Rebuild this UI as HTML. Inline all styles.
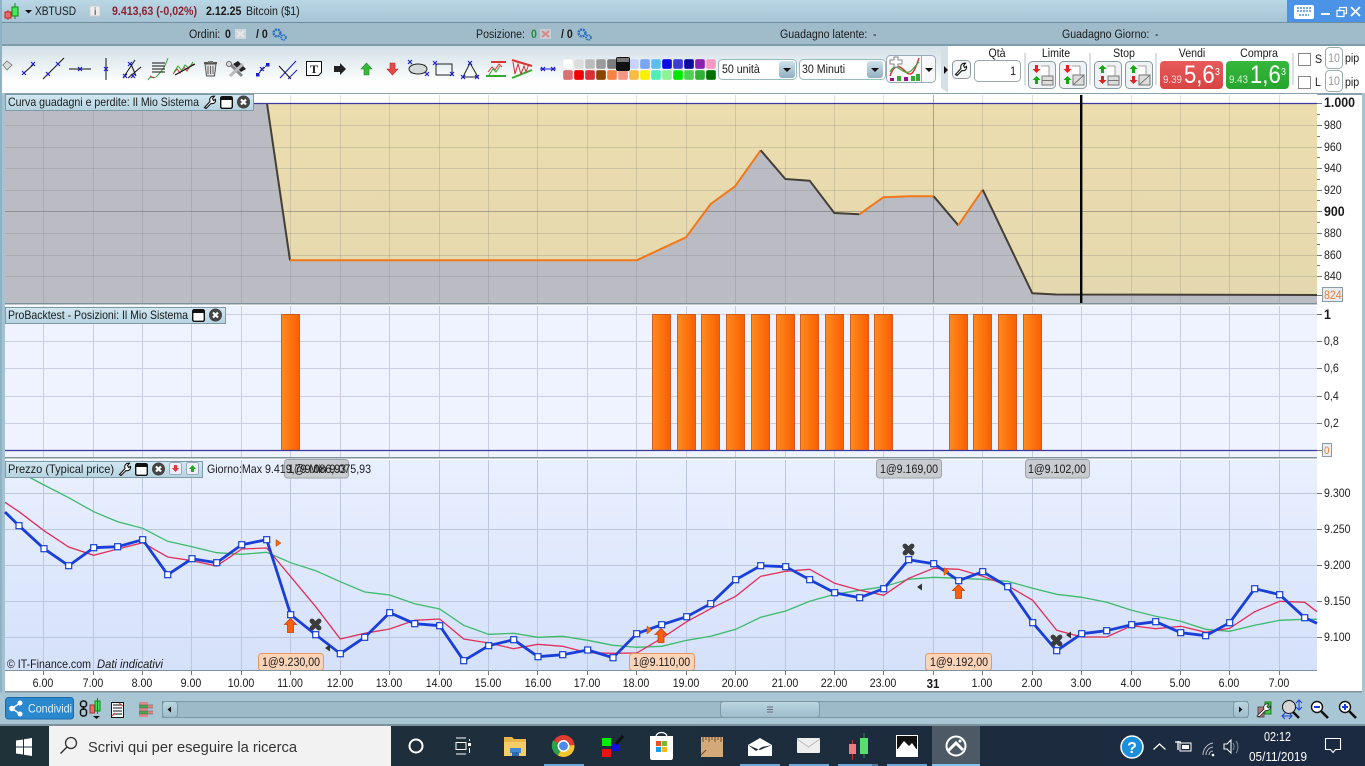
<!DOCTYPE html>
<html><head><meta charset="utf-8"><title>XBTUSD</title>
<style>
html,body{margin:0;padding:0;background:#a5c2d0;width:1365px;height:766px;overflow:hidden}
svg{display:block;position:absolute;left:0;top:0}
text{font-family:"Liberation Sans",sans-serif;font-size:12px;fill:#1a1a1a;transform-box:fill-box;transform-origin:0 50%;transform:scaleX(.885)}
.b{font-weight:bold}.ax{font-size:12px;fill:#222}
.m,.m text{text-anchor:middle;transform-origin:50% 50%}
.e{text-anchor:end;transform-origin:100% 50%}
text.n{transform:none}
</style></head><body>
<svg width="1365" height="766" viewBox="0 0 1365 766" xmlns="http://www.w3.org/2000/svg">
<defs>
<linearGradient id="top" x1="0" y1="0" x2="0" y2="1"><stop offset="0" stop-color="#b9d7e5"/><stop offset="1" stop-color="#a6c4d3"/></linearGradient>
<linearGradient id="tb" x1="0" y1="0" x2="0" y2="1"><stop offset="0" stop-color="#d2e0e7"/><stop offset=".75" stop-color="#fdfefe"/><stop offset="1" stop-color="#fff"/></linearGradient>
<linearGradient id="tab" x1="0" y1="0" x2="0" y2="1"><stop offset="0" stop-color="#d2e8f2"/><stop offset="1" stop-color="#b5d3e0"/></linearGradient>
<linearGradient id="beige" x1="0" y1="0" x2="0" y2="1"><stop offset="0" stop-color="#ecddaf"/><stop offset="1" stop-color="#e4d8ae"/></linearGradient>
<linearGradient id="p3" x1="0" y1="0" x2="0" y2="1"><stop offset="0" stop-color="#e9f0ff"/><stop offset="1" stop-color="#d5e1fa"/></linearGradient>
<linearGradient id="bar" x1="0" y1="0" x2="1" y2="0"><stop offset="0" stop-color="#ff8a20"/><stop offset="1" stop-color="#f85f00"/></linearGradient>
<linearGradient id="btn" x1="0" y1="0" x2="0" y2="1"><stop offset="0" stop-color="#cfe2ec"/><stop offset="1" stop-color="#8fb0c0"/></linearGradient>
<linearGradient id="tk" x1="0" y1="0" x2="1" y2="0"><stop offset="0" stop-color="#1f3139"/><stop offset="1" stop-color="#1b2a40"/></linearGradient>
<linearGradient id="red" x1="0" y1="0" x2="0" y2="1"><stop offset="0" stop-color="#e85a5a"/><stop offset="1" stop-color="#d84444"/></linearGradient>
<linearGradient id="grn" x1="0" y1="0" x2="0" y2="1"><stop offset="0" stop-color="#35b83c"/><stop offset="1" stop-color="#26a52e"/></linearGradient>
<linearGradient id="thumb" x1="0" y1="0" x2="0" y2="1"><stop offset="0" stop-color="#bcd6e2"/><stop offset="1" stop-color="#9dbccb"/></linearGradient>
<marker id="sq" markerUnits="userSpaceOnUse" markerWidth="8" markerHeight="8" refX="4" refY="4"><rect x="1" y="1" width="6" height="6" fill="#fff" stroke="#1540d0" stroke-width="1.2"/></marker>
<g id="x"><path d="M-2-2L2 2M-2 2L2-2" stroke="#1a1ad0" stroke-width="1.1" fill="none"/></g>
<g id="close"><circle cx="6.5" cy="6.5" r="6.5" fill="#444"/><path d="M4 4L9 9M9 4L4 9" stroke="#fff" stroke-width="2.2"/></g>
<g id="win"><rect x=".7" y=".7" width="11.6" height="11.6" rx="1.5" fill="#fff" stroke="#111" stroke-width="1.4"/><rect x="1" y="1" width="11" height="3" fill="#111"/></g>
<g id="wr"><path d="M1.5 12.5L7 6.5C6 3.5 8 .8 11.5 1.2L9.5 3.5L10.5 5.5L12.5 4.5C13 7.5 10.5 9.2 8 8.5L3 13.5Z" fill="#fff" stroke="#111" stroke-width="1.1"/></g>
<g id="gear"><circle cx="5" cy="5" r="3.4" fill="none" stroke="#2a6fc0" stroke-width="2.4" stroke-dasharray="2 .8"/><circle cx="11.5" cy="9.5" r="2.4" fill="none" stroke="#2a6fc0" stroke-width="1.8" stroke-dasharray="1.5 .7"/></g>
<g id="up"><path d="M-3-1H-6L0-7L6-1H3V7H-3Z" fill="#f85f10" stroke="#c84000" stroke-width=".8"/></g>
<g id="cross"><path d="M-3.500-3.500L3.500 3.500M-3.500 3.500L3.500-3.500" stroke="#3c3c3c" stroke-width="4.800" stroke-linecap="round"/></g>
<g id="doc"><rect x=".5" y=".5" width="27" height="27" rx="4" fill="#eef2f4" stroke="#8a9aa3"/><path d="M13 5H21V21H13" fill="#fff" stroke="#888" stroke-width=".8"/></g>
</defs>

<!-- chrome -->
<rect width="1365" height="766" fill="#a5c2d0"/>
<rect width="1365" height="22" fill="url(#top)"/>
<rect y="22" width="1365" height="1" fill="#6f8f9f"/>
<rect y="23" width="1365" height="22" fill="#a0bccb"/>
<rect y="44" width="1365" height="2" fill="#7f9cab"/>
<rect y="46" width="1365" height="47" fill="url(#tb)"/>
<rect x="948" y="46" width="417" height="47" fill="#fff"/>
<path d="M948 46L941 50V88L948 93Z" fill="#d5e0e6"/>
<rect x="0" y="0" width="2" height="725" fill="#8db2c6"/>

<!-- windows controls -->
<rect x="1287" y="0" width="78" height="22" fill="#4a93e6"/>
<rect x="1294" y="5" width="20" height="14" rx="2" fill="#fff"/>
<path d="M1297 8h14M1297 11h14M1299 15h10" stroke="#4a93e6" stroke-width="1.6" stroke-dasharray="2 1"/>
<rect x="1321" y="13" width="9" height="2" fill="#fff"/>
<path d="M1337 10.500h7v6h-7zM1339.500 10V7.500h7v6H1344" fill="none" stroke="#fff" stroke-width="1.200"/>
<path d="M1351 7l9 9M1360 7l-9 9" stroke="#fff" stroke-width="1.800"/>

<!-- top row -->
<path d="M8 10V20" stroke="#c22"/><rect x="5" y="12" width="6" height="6" fill="#f06a6a" stroke="#b22"/>
<path d="M15 3V19" stroke="#181"/><rect x="12" y="7" width="6" height="9" fill="#44e85a" stroke="#181"/>
<path d="M25 10h7l-3.500 3.500z" fill="#111"/>
<text x="35" y="15" class="n" textLength="41" lengthAdjust="spacingAndGlyphs">XBTUSD</text>
<rect x="90" y="6" width="10" height="10" fill="#eee" stroke="#ccc"/><text x="94" y="15" class="b" style="font-size:10px;fill:#666">i</text>
<text x="112" y="15" class="b" style="fill:#8e2233">9.413,63 (-0,02%)</text>
<text x="206" y="15" class="b">2.12.25</text><text x="246" y="15">Bitcoin ($1)</text>

<!-- row 2 -->
<text x="189" y="38">Ordini:</text><text x="225" y="38" class="b">0</text>
<rect x="235" y="29" width="11" height="10" fill="#cdd6da"/><path d="M237 31l7 6M244 31l-7 6" stroke="#e8e8e8" stroke-width="2"/>
<text x="256" y="38" class="b">/ 0</text><use href="#gear" x="272" y="28"/>
<text x="476" y="38">Posizione:</text><text x="531" y="38" class="b" style="fill:#2a8a3a">0</text>
<rect x="540" y="29" width="11" height="10" fill="#c5ced4"/><path d="M542 31l7 6M549 31l-7 6" stroke="#d58a8a" stroke-width="2"/>
<text x="561" y="38" class="b">/ 0</text><use href="#gear" x="577" y="28"/>
<text x="780" y="38">Guadagno latente:</text><text x="873" y="38">-</text>
<text x="1062" y="38">Guadagno Giorno:</text><text x="1155" y="38">-</text>

<!-- drawing toolbar -->
<path d="M3 65l4-4 5 4-5 5z" fill="#ddd" stroke="#888"/>
<path d="M24 73L34 64" stroke="#111"/><use href="#x" x="24" y="73"/><use href="#x" x="33" y="64"/>
<path d="M43 79L64 58" stroke="#111"/><use href="#x" x="48" y="74"/><use href="#x" x="58" y="64"/>
<path d="M69 69H91" stroke="#111"/><use href="#x" x="80" y="69"/>
<path d="M106 58V80" stroke="#111"/><use href="#x" x="106" y="69"/>
<path d="M123 78L135 60M128 78L141 67M131 64L136 76" stroke="#111"/><use href="#x" x="130" y="64"/><use href="#x" x="125" y="76"/><use href="#x" x="133" y="76"/>
<path d="M148 80c3-6 6 0 9-4s6-4 11-18" stroke="#3a3" fill="none"/><path d="M152 63h13M152 66h13M152 69h13M152 72h13" stroke="#111"/><path d="M150 76l4 2" stroke="#c33"/>
<path d="M173 74l4-5 3 4 4-6 3 4 3-5 4-2" stroke="#c33" fill="none"/><path d="M174 72l4-6 4 5 3-6 4 3 4-6" stroke="#3a3" fill="none"/><path d="M175 75L195 64" stroke="#111"/>
<path d="M204 63h13" stroke="#555" stroke-width="2"/><path d="M205 64l1.500 12h8l1.500-12z" fill="#ddd" stroke="#555"/><path d="M208 66v8M210.500 66v8M213 66v8" stroke="#666"/><rect x="208" y="61" width="5" height="2" fill="#777"/>
<path d="M229 63l13 13" stroke="#888" stroke-width="3"/><path d="M233 64l5-3 8 8-5 3z" fill="#222"/><path d="M243 64l-13 12" stroke="#bbb" stroke-width="3"/><circle cx="229" cy="64" r="2.500" fill="#ddd" stroke="#666"/>
<path d="M257 75L268 64" stroke="#111" stroke-dasharray="2 1"/><rect x="256" y="73" width="3.500" height="3.500" fill="#1a1ad0"/><rect x="266" y="63" width="3.500" height="3.500" fill="#1a1ad0"/><use href="#x" x="262" y="69"/>
<path d="M280 78L296 61M288 79L297 70" stroke="#1a1ad0"/><path d="M279 66L291 79" stroke="#111"/>
<path d="M306.500 61.500h15v11l-3 3h-12z" fill="#fff" stroke="#111"/><text x="310" y="73" class="b n" style="font-family:'Liberation Serif',serif;font-size:12px">T</text>
<path d="M334 66h6v-3l6 6-6 6v-3h-6z" fill="#222"/>
<path d="M364 75v-6h-3l5.500-6 5.500 6h-3v6z" fill="#38b838" stroke="#2a8a2a" stroke-width=".6"/>
<path d="M390 63v6h-3l5.500 6 5.500-6h-3v-6z" fill="#e84848" stroke="#a33" stroke-width=".6"/>
<rect x="410" y="64" width="16" height="10" fill="#d4d8d8"/><ellipse cx="418" cy="69" rx="9" ry="5" fill="none" stroke="#222"/><use href="#x" x="410" y="62"/><use href="#x" x="427" y="74"/>
<path d="M436 64H452V75H436Z" fill="none" stroke="#222"/><use href="#x" x="435" y="63"/><use href="#x" x="452" y="74"/>
<path d="M470 63L463 77H478Z" fill="none" stroke="#222"/><use href="#x" x="470" y="63"/><use href="#x" x="463" y="77"/><use href="#x" x="477" y="77"/>
<path d="M491 62H506" stroke="#d33" stroke-width="2"/><path d="M486 76H506" stroke="#3a3" stroke-width="2"/><path d="M488 72l4-5 3 3 4-6 3 3" stroke="#d33" fill="none"/><path d="M489 75l4-6 3 3 4-6" stroke="#3a3" fill="none"/>
<path d="M512 60L532 66" stroke="#d33" stroke-width="2"/><path d="M512 78L532 70" stroke="#3a3" stroke-width="2"/><path d="M513 62l2 12 3-10 3 10 3-8 2 6 3-8" stroke="#c33" fill="none"/>
<path d="M540 69H556" stroke="#1a1ad0" stroke-width="1"/><use href="#x" x="543" y="69"/><use href="#x" x="553" y="69"/>

<!-- swatches -->
<g stroke="#fff" stroke-width=".3">
<rect x="563" y="59" width="10" height="10" rx="2" fill="#fff" stroke="#ccc"/><rect x="574" y="59" width="10" height="10" rx="2" fill="#dcdcdc"/><rect x="585" y="59" width="10" height="10" rx="2" fill="#bcbcbc"/><rect x="596" y="59" width="10" height="10" rx="2" fill="#9b9b9b"/><rect x="607" y="59" width="10" height="10" rx="2" fill="#7c7c7c"/>
<rect x="629" y="59" width="10" height="10" rx="2" fill="#c6d2f8"/><rect x="640" y="59" width="10" height="10" rx="2" fill="#78a6f5"/><rect x="651" y="59" width="10" height="10" rx="2" fill="#5cbcf6"/><rect x="662" y="59" width="10" height="10" rx="2" fill="#0c0ce0"/><rect x="673" y="59" width="10" height="10" rx="2" fill="#3c3cd0"/><rect x="684" y="59" width="10" height="10" rx="2" fill="#0a0a9c"/><rect x="695" y="59" width="10" height="10" rx="2" fill="#8a20b0"/><rect x="706" y="59" width="10" height="10" rx="2" fill="#f29ac2"/>
<rect x="563" y="70" width="10" height="10" rx="2" fill="#d87074"/><rect x="574" y="70" width="10" height="10" rx="2" fill="#f00000"/><rect x="585" y="70" width="10" height="10" rx="2" fill="#d83036"/><rect x="596" y="70" width="10" height="10" rx="2" fill="#8a4400"/><rect x="607" y="70" width="10" height="10" rx="2" fill="#f88444"/><rect x="618" y="70" width="10" height="10" rx="2" fill="#f89484"/><rect x="629" y="70" width="10" height="10" rx="2" fill="#f8bc44"/><rect x="640" y="70" width="10" height="10" rx="2" fill="#f8f000"/><rect x="651" y="70" width="10" height="10" rx="2" fill="#50f0b4"/><rect x="662" y="70" width="10" height="10" rx="2" fill="#90f094"/><rect x="673" y="70" width="10" height="10" rx="2" fill="#00e800"/><rect x="684" y="70" width="10" height="10" rx="2" fill="#50d054"/><rect x="695" y="70" width="10" height="10" rx="2" fill="#30b034"/><rect x="706" y="70" width="10" height="10" rx="2" fill="#007000"/>
</g>
<rect x="616" y="57" width="14" height="14" rx="2" fill="#111"/><rect x="617" y="58" width="12" height="4" fill="#777"/>

<!-- selects -->
<rect x="718.500" y="59.500" width="78" height="20" rx="4" fill="#fff" stroke="#9bb"/><text x="722" y="73">50 unità</text>
<rect x="779" y="61" width="16" height="17" rx="3" fill="url(#btn)"/><path d="M783 68h8l-4 4z" fill="#111"/>
<rect x="799.500" y="59.500" width="86" height="20" rx="4" fill="#fff" stroke="#9bb"/><text x="802" y="73">30 Minuti</text>
<rect x="867" y="61" width="16" height="17" rx="3" fill="url(#btn)"/><path d="M871 68h8l-4 4z" fill="#111"/>
<rect x="886.500" y="55.500" width="49" height="27" rx="4" fill="#f6f8f9" stroke="#9ab"/><path d="M921.500 56V82" stroke="#9ab"/><path d="M925 68h8l-4 4z" fill="#111"/>
<path d="M890 76c5-14 10-10 15-5s8 6 14-13" stroke="#c33" fill="none" stroke-width="1.400"/><path d="M890 72c5-10 9-2 15 0s8-4 14-10" stroke="#4a4" fill="none" stroke-width="1.200"/>
<rect x="890" y="78" width="4" height="3" fill="#918"/><rect x="897" y="76" width="4" height="5" fill="#3a3"/><rect x="904" y="77" width="4" height="4" fill="#918"/><rect x="911" y="76" width="4" height="5" fill="#3a3"/><rect x="916" y="74" width="4" height="7" fill="#3a3"/>
<path d="M890 60h4v-3h4v3h4v4h-4v3h-4v-3h-4z" fill="#fff" stroke="#888"/>

<!-- trade section -->
<path d="M944 66l4 4-4 4z" fill="#111"/>
<rect x="952.500" y="60.500" width="18" height="18" rx="4" fill="#f5f7f8" stroke="#8a9aa3"/><use href="#wr" x="954" y="62"/>
<text x="997" y="57" class="m">Qtà</text><rect x="974.500" y="60.500" width="46" height="21" rx="4" fill="#fff" stroke="#9aa8b0"/><text x="1016" y="75" class="e">1</text>
<path d="M1025 53v32M1090 53v32M1156 53v32M1293 53v32" stroke="#b5c0c6"/>
<text x="1056" y="57" class="m">Limite</text><text x="1124" y="57" class="m">Stop</text><text x="1192" y="57" class="m">Vendi</text><text x="1259" y="57" class="m">Compra</text>
<use href="#doc" x="1028" y="61"/><use href="#doc" x="1059" y="61"/><use href="#doc" x="1094" y="61"/><use href="#doc" x="1125" y="61"/>
<path d="M1035 65v4h-2.500l4 4 4-4H1038v-4z" fill="#d22"/><path d="M1035 84v-4h-2.500l4-4 4 4H1038v4z" fill="#1a1"/><rect x="1042" y="76" width="11" height="9" fill="#ddd" stroke="#777"/><path d="M1042 80.500h11" stroke="#777"/>
<path d="M1066 65v4h-2.500l4 4 4-4H1069v-4z" fill="#d22"/><path d="M1066 84v-4h-2.500l4-4 4 4H1069v4z" fill="#1a1"/><rect x="1073" y="75" width="11" height="10" fill="#ddd" stroke="#777"/><path d="M1073 85l11-10" stroke="#777"/>
<path d="M1101 73v-4h-2.500l4-4 4 4H1104v4z" fill="#1a1"/><path d="M1101 76v4h-2.500l4 4 4-4H1104v-4z" fill="#d22"/><rect x="1108" y="76" width="11" height="9" fill="#ddd" stroke="#777"/><path d="M1108 80.500h11" stroke="#777"/>
<path d="M1132 73v-4h-2.500l4-4 4 4H1135v4z" fill="#1a1"/><path d="M1132 76v4h-2.500l4 4 4-4H1135v-4z" fill="#d22"/><rect x="1139" y="75" width="11" height="10" fill="#ddd" stroke="#777"/><path d="M1139 85l11-10" stroke="#777"/>
<rect x="1160" y="61" width="63" height="28" rx="4" fill="url(#red)"/>
<text x="1163" y="83" style="font-size:11px;fill:#f6dcdc">9.39</text><text x="1184" y="83" style="font-size:25px;fill:#fff">5,6</text><text x="1215" y="75" style="font-size:10px;fill:#fff">3</text>
<rect x="1226" y="61" width="63" height="28" rx="4" fill="url(#grn)"/>
<text x="1229" y="83" style="font-size:11px;fill:#dcf5dc">9.43</text><text x="1250" y="83" style="font-size:25px;fill:#fff">1,6</text><text x="1281" y="75" style="font-size:10px;fill:#fff">3</text>
<rect x="1298.500" y="53.500" width="12" height="12" fill="#fff" stroke="#888"/><rect x="1298.500" y="76.500" width="12" height="12" fill="#fff" stroke="#888"/>
<text x="1315" y="63">S</text><text x="1315" y="86">L</text>
<rect x="1325.500" y="47.500" width="17" height="21" rx="4" fill="#fff" stroke="#9aa"/><rect x="1325.500" y="70.500" width="17" height="21" rx="4" fill="#fff" stroke="#9aa"/>
<text x="1334" y="62" class="m" style="fill:#999">10</text><text x="1334" y="85" class="m" style="fill:#999">10</text>
<text x="1345" y="62">pip</text><text x="1345" y="86">pip</text>

<!-- plots frame -->
<rect x="1317" y="93" width="45" height="599" fill="#fff"/>
<rect x="5" y="93" width="1357" height="2" fill="#8aa0ad"/>
<rect x="5" y="94" width="1312" height="576" fill="#fff"/>

<!-- PANEL 1 -->
<rect x="5" y="95" width="1312" height="9" fill="#fff"/>
<rect x="5" y="103" width="1312" height="200" fill="url(#beige)"/>
<path d="M5 103.500H267L290 260.300H636.700L686 237.300L710.700 204L735 186.300L760.700 150.300L785.300 179L809.700 180.700L834.300 213L859.300 214.300L883.300 197.300L908.300 196.300L933.700 196.300L958.300 225.300L982.700 189.700L1032.300 293.300L1056 294.500L1317 295V303.500H5Z" fill="#bbbcc3"/>
<g stroke="#7a7a7a" stroke-opacity=".25">
<path d="M5 125.500H1317M5 147.500H1317M5 168.500H1317M5 190.500H1317M5 233.500H1317M5 255.500H1317M5 276.500H1317"/>
<path d="M43.500 95V303M93.500 95V303M142.500 95V303M191.500 95V303M241.500 95V303M290.500 95V303M340.500 95V303M389.500 95V303M439.500 95V303M488.500 95V303M537.500 95V303M587.500 95V303M636.500 95V303M686.500 95V303M735.500 95V303M785.500 95V303M834.500 95V303M883.500 95V303M982.500 95V303M1032.500 95V303M1081.500 95V303M1131.500 95V303M1180.500 95V303M1229.500 95V303M1279.500 95V303"/>
</g>
<path d="M5 211.500H1317M933.500 95V303" stroke="#666" stroke-opacity=".5"/>
<path d="M5 103.500H1317" stroke="#3a3a9c" stroke-width="1.200"/>
<g fill="none" stroke-width="2" stroke-linejoin="round">
<polyline points="267,103.500 290,260.300" stroke="#444038"/>
<polyline points="290,260.300 636.700,260.300 686,237.300 710.700,204 735,186.300 760.700,150.300" stroke="#f07818"/>
<polyline points="760.700,150.300 785.300,179 809.700,180.700 834.300,213 859.300,214.300" stroke="#444038"/>
<polyline points="859.300,214.300 883.300,197.300 908.300,196.300 933.700,196.300" stroke="#f07818"/>
<polyline points="933.700,196.300 958.300,225.300" stroke="#444038"/>
<polyline points="958.300,225.300 982.700,189.700" stroke="#f07818"/>
<polyline points="982.700,189.700 1032.300,293.300 1056,294.500 1317,295" stroke="#444038"/>
</g>
<rect x="1080" y="95" width="2.400" height="208" fill="#000"/>
<rect x="5" y="303" width="1312" height="1.500" fill="#7d929c"/>
<rect x="5" y="304.500" width="1312" height="1.500" fill="#fff"/>
<!-- axis 1 -->
<path d="M1317 103.500h5M1317 125.500h5M1317 147.500h5M1317 168.500h5M1317 190.500h5M1317 211.500h5M1317 233.500h5M1317 255.500h5M1317 276.500h5M1317 295.500h5M1317 114.500h3M1317 136.500h3M1317 157.500h3M1317 179.500h3M1317 200.500h3M1317 222.500h3M1317 244.500h3M1317 265.500h3" stroke="#777"/>
<text x="1324" y="107" class="b" style="font-size:14px">1.000</text>
<text x="1324" y="129" class="ax">980</text><text x="1324" y="151" class="ax">960</text><text x="1324" y="172" class="ax">940</text><text x="1324" y="194" class="ax">920</text>
<text x="1324" y="216" class="b" style="font-size:14px">900</text>
<text x="1324" y="237" class="ax">880</text><text x="1324" y="259" class="ax">860</text><text x="1324" y="280" class="ax">840</text>
<rect x="1322.500" y="287.500" width="20" height="14" fill="#e8ecf4" stroke="#8a9aa3"/><text x="1324" y="299" style="fill:#e98030">824</text>

<!-- PANEL 2 -->
<rect x="5" y="306" width="1312" height="151" fill="#eff3ff"/>
<g stroke="#c9cfe0">
<path d="M5 314.500H1317M5 341.500H1317M5 368.500H1317M5 396.500H1317M5 423.500H1317"/>
<path d="M43.500 306V457M93.500 306V457M142.500 306V457M191.500 306V457M241.500 306V457M290.500 306V457M340.500 306V457M389.500 306V457M439.500 306V457M488.500 306V457M537.500 306V457M587.500 306V457M636.500 306V457M686.500 306V457M735.500 306V457M785.500 306V457M834.500 306V457M883.500 306V457M933.500 306V457M982.500 306V457M1032.500 306V457M1081.500 306V457M1131.500 306V457M1180.500 306V457M1229.500 306V457M1279.500 306V457"/>
</g>
<g fill="url(#bar)" stroke="#c8480a" stroke-width=".8">
<rect x="281.500" y="314.500" width="18" height="136"/><rect x="652.500" y="314.500" width="18" height="136"/><rect x="677.500" y="314.500" width="18" height="136"/><rect x="701.500" y="314.500" width="18" height="136"/><rect x="726.500" y="314.500" width="18" height="136"/><rect x="751.500" y="314.500" width="18" height="136"/><rect x="776.500" y="314.500" width="18" height="136"/><rect x="800.500" y="314.500" width="18" height="136"/><rect x="825.500" y="314.500" width="18" height="136"/><rect x="850.500" y="314.500" width="18" height="136"/><rect x="874.500" y="314.500" width="18" height="136"/><rect x="949.500" y="314.500" width="18" height="136"/><rect x="973.500" y="314.500" width="18" height="136"/><rect x="998.500" y="314.500" width="18" height="136"/><rect x="1023.500" y="314.500" width="18" height="136"/>
</g>
<path d="M5 450.500H1317" stroke="#3a3a9c" stroke-width="1.200"/>
<rect x="5" y="457" width="1312" height="1.500" fill="#7d929c"/>
<rect x="5" y="458.500" width="1312" height="1.500" fill="#fff"/>
<path d="M1317 314.500h5M1317 341.500h5M1317 368.500h5M1317 396.500h5M1317 423.500h5M1317 450.500h5" stroke="#777"/>
<text x="1324" y="319" class="b" style="font-size:14px">1</text>
<text x="1324" y="345" class="ax">0,8</text><text x="1324" y="372" class="ax">0,6</text><text x="1324" y="400" class="ax">0,4</text><text x="1324" y="427" class="ax">0,2</text>
<rect x="1322.500" y="443.500" width="9" height="13" fill="#e8ecf4" stroke="#8a9aa3"/><text x="1324" y="454" style="fill:#e98030;font-size:11px">0</text>

<!-- PANEL 3 -->
<rect x="5" y="460" width="1312" height="210" fill="url(#p3)"/>
<g stroke="#bcc7de">
<path d="M5 493.500H1317M5 529.500H1317M5 565.500H1317M5 601.500H1317M5 637.500H1317"/>
<path d="M43.500 460V670M93.500 460V670M142.500 460V670M191.500 460V670M241.500 460V670M290.500 460V670M340.500 460V670M389.500 460V670M439.500 460V670M488.500 460V670M537.500 460V670M587.500 460V670M636.500 460V670M686.500 460V670M735.500 460V670M785.500 460V670M834.500 460V670M883.500 460V670M933.500 460V670M982.500 460V670M1032.500 460V670M1081.500 460V670M1131.500 460V670M1180.500 460V670M1229.500 460V670M1279.500 460V670"/>
</g>
<path d="M1317 493.500h5M1317 529.500h5M1317 565.500h5M1317 601.500h5M1317 637.500h5" stroke="#777"/>
<text x="1324" y="497" class="ax">9.300</text><text x="1324" y="533" class="ax">9.250</text><text x="1324" y="569" class="ax">9.200</text><text x="1324" y="605" class="ax">9.150</text><text x="1324" y="641" class="ax">9.100</text>
<polyline fill="none" stroke="#3dba6b" stroke-width="1.300" points="28,476.500 44,485 68.700,497.700 93.700,511.700 117.700,521.700 142.700,528.300 167.700,541.300 192,546.700 216.700,552.700 241.700,554.300 266.700,552.300 290.700,562.700 315.700,570.700 340.300,581.700 364.700,592 389.700,595 414.700,603.700 439.700,609 463.700,625.300 488.700,634.300 513.700,633.300 538,637.300 562.700,636.300 587.700,640.300 613,645.300 636.700,647.300 661.700,646.300 686.700,640.300 710.700,636.300 735.700,629.300 760.700,617.300 785.700,611 809.700,601.300 834.700,594.300 859.700,590.300 883.700,586.700 908.700,579.300 933.700,577.300 958.700,578.300 982.700,579.300 1007.700,581.300 1032.700,588.300 1056.700,594.300 1081.700,597.300 1106.700,602.300 1131.700,610.300 1155.700,616.300 1180.700,621.300 1205.700,629.300 1229.700,631.300 1254.700,625.300 1279.700,620.300 1304.700,619.300 1317,619.300"/>
<polyline fill="none" stroke="#e0305a" stroke-width="1.300" points="5,502.300 19,511.700 44,530.700 68.700,547 93.700,555.300 117.700,549 142.700,542.700 167.700,557 192,560.700 216.700,566 241.700,549 266.700,548 290.700,576.700 315.700,606.700 340.300,639 364.700,633.300 389.700,629 414.700,620.300 439.700,619 463.700,639 488.700,643 513.700,648.700 538,644.300 562.700,646.300 587.700,652.700 613,653.300 636.700,653 661.700,638.300 686.700,621.700 710.700,608.700 735.700,596.300 760.700,576.300 785.700,571.300 809.700,569.300 834.700,583.300 859.700,590.300 883.700,595.300 908.700,578.300 933.700,568.300 958.700,569.300 982.700,576.300 1007.700,585.700 1032.700,600.300 1056.700,630.300 1081.700,637 1106.700,637 1131.700,625.700 1155.700,628.700 1180.700,626.300 1205.700,632.300 1229.700,628.300 1254.700,611.700 1279.700,601.300 1304.700,602.300 1317,611.700"/>
<polyline fill="none" stroke="#1a3fd8" stroke-width="2.800" stroke-linejoin="round" marker-mid="url(#sq)" points="5,512 19,525.700 44,548.700 68.700,565.700 93.700,547.700 117.700,546.700 142.700,539.700 167.700,574.700 192,558.700 216.700,562.700 241.700,544.700 266.700,539.700 290.700,614.700 315.700,634.700 340.300,653.700 364.700,637.300 389.700,612.700 414.700,623.700 439.700,625.700 463.700,660.700 488.700,645.700 513.700,639.700 538,656.700 562.700,654.700 587.700,650 613,657.700 636.700,633.700 661.700,624.700 686.700,616.700 710.700,603.700 735.700,579.700 760.700,565.700 785.700,566.700 809.700,579.700 834.700,592.700 859.700,597.700 883.700,588.700 908.700,559.700 933.700,563.700 958.700,580.700 982.700,571.700 1007.700,586.700 1032.700,622.700 1056.700,650.700 1081.700,633.700 1106.700,630.700 1131.700,624.700 1155.700,621.700 1180.700,632.700 1205.700,635.700 1229.700,622.700 1254.700,588.700 1279.700,594.700 1304.700,617.700 1317,623.300"/>
<!-- trade markers -->
<use href="#up" x="290.500" y="625.500"/><use href="#up" x="661" y="635.500"/><use href="#up" x="958.500" y="591.500"/>
<use href="#cross" x="315.500" y="624.500"/><use href="#cross" x="908.500" y="549.500"/><use href="#cross" x="1056.500" y="640.500"/>
<path d="M276 539.500l5 3.500-5 3.500zM647 626l5 4-5 4zM944 567.500l5 4-5 4z" fill="#f06a10" stroke="#b84800" stroke-width=".5"/>
<path d="M330 644.500l-5 3.500 5 3.500zM1071 631.500l-5 3.500 5 3.500zM922 583.500l-5 3.500 5 3.500z" fill="#333"/>
<!-- labels -->
<g fill="#c8cbd0" stroke="#a0a4aa"><rect x="284.500" y="459.500" width="64" height="18.500" rx="3"/><rect x="876.500" y="459.500" width="65" height="18.500" rx="3"/><rect x="1025.500" y="459.500" width="64" height="18.500" rx="3"/></g>
<g fill="#fad4b8" stroke="#e8985c"><rect x="258.500" y="653.500" width="65" height="17" rx="3"/><rect x="629.500" y="653.500" width="65" height="17" rx="3"/><rect x="925.500" y="653.500" width="66" height="17" rx="3"/></g>
<text x="207" y="473" class="n" textLength="164" lengthAdjust="spacingAndGlyphs">Giorno:Max 9.419,79 Min 9.075,93</text>
<text x="288" y="473">1@9.086,93</text><text x="880" y="473">1@9.169,00</text><text x="1028" y="473">1@9.102,00</text>
<text x="262" y="666">1@9.230,00</text><text x="633" y="666">1@9.110,00</text><text x="930" y="666">1@9.192,00</text>
<text x="7" y="668" class="n" textLength="84" lengthAdjust="spacingAndGlyphs">© IT-Finance.com</text><text x="97" y="668" class="n" textLength="66" lengthAdjust="spacingAndGlyphs" style="font-style:italic">Dati indicativi</text>

<!-- tabs -->
<rect x="5.500" y="94.500" width="248" height="16" fill="url(#tab)" stroke="#7d9aa8"/>
<text x="8" y="106" class="n" textLength="191" lengthAdjust="spacingAndGlyphs">Curva guadagni e perdite: Il Mio Sistema</text>
<use href="#wr" x="203" y="95"/><use href="#win" x="220" y="96"/><use href="#close" x="237" y="95.500"/>
<rect x="5.500" y="307.500" width="220" height="16" fill="url(#tab)" stroke="#7d9aa8"/>
<text x="8" y="319" class="n" textLength="180" lengthAdjust="spacingAndGlyphs">ProBacktest - Posizioni: Il Mio Sistema</text>
<use href="#win" x="192" y="309"/><use href="#close" x="209" y="308.500"/>
<rect x="5.500" y="461.500" width="197" height="16" fill="url(#tab)" stroke="#7d9aa8"/>
<text x="8" y="473" class="n" textLength="106" lengthAdjust="spacingAndGlyphs">Prezzo (Typical price)</text>
<use href="#wr" x="118" y="462"/><use href="#win" x="135" y="463"/><use href="#close" x="152" y="462.500"/>
<rect x="169.500" y="462.500" width="12" height="12" rx="2" fill="#eef" stroke="#9ab"/><path d="M174 465v3h-2l3.500 4 3.500-4h-2v-3z" fill="#e33"/>
<rect x="186.500" y="462.500" width="12" height="12" rx="2" fill="#eef" stroke="#9ab"/><path d="M191 472v-3h-2l3.500-4 3.500 4h-2v3z" fill="#2a2"/>

<!-- time axis -->
<rect x="5" y="670" width="1357" height="22" fill="#fff"/>
<rect x="5" y="670" width="1312" height="1" fill="#7d929c"/>
<rect x="5" y="691" width="1357" height="1.500" fill="#7d929c"/>
<path d="M43.500 671v4M93.500 671v4M142.500 671v4M191.500 671v4M241.500 671v4M290.500 671v4M340.500 671v4M389.500 671v4M439.500 671v4M488.500 671v4M537.500 671v4M587.500 671v4M636.500 671v4M686.500 671v4M735.500 671v4M785.500 671v4M834.500 671v4M883.500 671v4M933.500 671v4M982.500 671v4M1032.500 671v4M1081.500 671v4M1131.500 671v4M1180.500 671v4M1229.500 671v4M1279.500 671v4" stroke="#777"/>
<g class="m">
<text x="43" y="687">6.00</text><text x="93" y="687">7.00</text><text x="142" y="687">8.00</text><text x="191" y="687">9.00</text><text x="241" y="687">10.00</text><text x="290" y="687">11.00</text><text x="340" y="687">12.00</text><text x="389" y="687">13.00</text><text x="439" y="687">14.00</text><text x="488" y="687">15.00</text><text x="538" y="687">16.00</text><text x="587" y="687">17.00</text><text x="636" y="687">18.00</text><text x="686" y="687">19.00</text><text x="735" y="687">20.00</text><text x="785" y="687">21.00</text><text x="834" y="687">22.00</text><text x="883" y="687">23.00</text><text x="933" y="688" class="b" style="font-size:13px">31</text><text x="982" y="687">1.00</text><text x="1032" y="687">2.00</text><text x="1081" y="687">3.00</text><text x="1131" y="687">4.00</text><text x="1180" y="687">5.00</text><text x="1229" y="687">6.00</text><text x="1279" y="687">7.00</text>
</g>

<!-- bottom bar -->
<rect x="0" y="692.500" width="1365" height="33" fill="#a9c6d4"/>
<rect x="0" y="724" width="1365" height="2" fill="#7d929c"/>
<rect x="5.500" y="697.500" width="68" height="21.500" rx="3" fill="#2a88cf" stroke="#1b6aa8"/>
<path d="M20 703L12 708.500L20 714" fill="none" stroke="#fff" stroke-width="1.400"/><circle cx="20" cy="703" r="2.500" fill="#fff"/><circle cx="12" cy="708.500" r="2.800" fill="#fff"/><circle cx="20" cy="714" r="2.500" fill="#fff"/>
<text x="28" y="712.500" class="n" textLength="44" lengthAdjust="spacingAndGlyphs" style="fill:#dff0fb">Condividi</text>
<rect x="80.500" y="701" width="6" height="6" rx="2.500" fill="none" stroke="#111" stroke-width="1.500"/><rect x="80.500" y="709" width="6" height="7" rx="2.500" fill="none" stroke="#111" stroke-width="1.500"/><path d="M83.500 706v4" stroke="#111" stroke-width="1.500"/>
<rect x="90" y="705" width="4.500" height="8" fill="#f06a6a" stroke="#a33"/><rect x="95" y="701" width="5" height="10" fill="#44e05a" stroke="#181"/><path d="M97.500 698v16" stroke="#181"/><path d="M93 716h7l-3.500 3z" fill="#111"/>
<rect x="111.500" y="702.500" width="12" height="15" fill="#fff" stroke="#111"/><path d="M113 705h9M113 708h9M113 711h9M113 714h9" stroke="#111"/><path d="M119 703l4 3M112 716l3-3" stroke="#d33"/>
<path d="M139 702h9v3h5v3h-5v3h5v3h-5v3h-9v-3h5v-3h-5v-3h5v-3h-5z" fill="#d88"/><path d="M139 705h9v3h-9zM139 711h9v3h-9z" fill="#4a4"/><path d="M139 705h14M139 708h14M139 711h14M139 714h14" stroke="#555" stroke-width=".5"/>
<rect x="162.500" y="701.500" width="1085" height="16" fill="#9dbac8" stroke="#7d97a4"/>
<rect x="162.500" y="701.500" width="15" height="16" rx="3" fill="url(#thumb)" stroke="#7d97a4"/><path d="M171 706.500v6l-3.500-3z" fill="#111"/>
<rect x="1233.500" y="701.500" width="15" height="16" rx="3" fill="url(#thumb)" stroke="#7d97a4"/><path d="M1239 706.500v6l3.500-3z" fill="#111"/>
<rect x="720.500" y="701.500" width="99" height="16" rx="3" fill="url(#thumb)" stroke="#7d97a4"/><path d="M767 707h6M767 709.500h6M767 712h6" stroke="#667"/>
<rect x="1258" y="707" width="6" height="10" fill="#b87070" stroke="#555"/><rect x="1265" y="702" width="6" height="12" fill="#45c850" stroke="#181"/><path d="M1257 716l7-7c-1-3 1-6 5-5l-2 2.500 1.500 1.500 2-2c.5 3-2 5-5 4.500l-6 6z" fill="#fff" stroke="#222" stroke-width=".8"/>
<circle cx="1289" cy="707" r="6.500" fill="#d5d5d5" stroke="#111"/><path d="M1293 712l6 6" stroke="#111" stroke-width="2.500"/><path d="M1299 700v10M1296 703l3-3 3 3M1296 707l3 3 3-3M1282 716h10M1285 713l-3 3 3 3M1289 713l3 3-3 3" fill="none" stroke="#1a3fd0"/>
<circle cx="1317" cy="707" r="5.500" fill="#fff" stroke="#111" stroke-width="1.400"/><path d="M1314 707h6" stroke="#1a3fd0" stroke-width="2"/><path d="M1321 711l7 7" stroke="#111" stroke-width="2.500"/>
<circle cx="1345" cy="707" r="5.500" fill="#fff" stroke="#111" stroke-width="1.400"/><path d="M1342 707h6M1345 704v6" stroke="#1a3fd0" stroke-width="2"/><path d="M1349 711l7 7" stroke="#111" stroke-width="2.500"/>

<!-- taskbar -->
<rect y="726" width="1365" height="40" fill="url(#tk)"/>
<path d="M16 740.500l7-1v7h-7zM24 739.300l8-1.300v8.500h-8zM16 747.500h7v7l-7-1zM24 747.500h8v8.500l-8-1.300z" fill="#fff"/>
<rect x="49" y="726" width="342" height="40" fill="#f2f2f2"/>
<circle cx="71" cy="743" r="5.500" fill="none" stroke="#333" stroke-width="1.300"/><path d="M67 747l-6.500 6.500" stroke="#333" stroke-width="1.400"/>
<text x="88" y="752" class="n" textLength="209" lengthAdjust="spacingAndGlyphs" style="font-size:15px;fill:#333">Scrivi qui per eseguire la ricerca</text>
<circle cx="416" cy="746" r="6.500" fill="none" stroke="#fff" stroke-width="2"/>
<path d="M456 738h10M456 754h10M456 742.500h10v7h-10z" fill="none" stroke="#fff"/><rect x="468" y="743" width="3" height="3" fill="#fff"/><path d="M469.500 739v2M469.500 748v5" stroke="#fff"/>
<path d="M504 737h8l2 2h12v17h-22z" fill="#e8b64c"/><rect x="504" y="742" width="22" height="14" fill="#f5cd68"/><rect x="510" y="748" width="11" height="5" fill="#3f8ad0"/><rect x="512" y="752" width="7" height="4" fill="#2a6ab0"/>
<circle cx="563.500" cy="746" r="11" fill="#e33b2e"/><path d="M563.500 746L553 740.500A11 11 0 0 0 558 755.500Z" fill="#2ba24c"/><path d="M563.500 746L558 755.500A11 11 0 0 0 574.500 745Z" fill="#f7c52d"/><circle cx="563.500" cy="746" r="5.200" fill="#4a8af0" stroke="#fff" stroke-width="1.500"/>
<rect x="602" y="738" width="9" height="8" fill="#0e0"/><rect x="602" y="749" width="9" height="8" fill="#e11"/><rect x="611" y="744" width="9" height="7" fill="#11d"/><path d="M616 744l7-8" stroke="#111" stroke-width="3"/>
<path d="M650 741h23v22c0 1-1 2-2 2h-19c-1 0-2-1-2-2z" fill="#fff" transform="translate(0,-5)"/><path d="M656 737c0-6 11-6 11 0" fill="none" stroke="#fff" stroke-width="1.300"/>
<rect x="656" y="741" width="5" height="5" fill="#e8512a"/><rect x="662" y="741" width="5" height="5" fill="#7cb82a"/><rect x="656" y="747" width="5" height="5" fill="#18a0e8"/><rect x="662" y="747" width="5" height="5" fill="#f8b818"/>
<rect x="701" y="737" width="22" height="20" fill="#d4a97a"/><path d="M703 737v5M706 737v3M709 737v5M712 737v3M715 737v5M718 737v3M721 737v5" stroke="#6b4a2a"/><path d="M701 755l5-5" stroke="#6b4a2a"/>
<path d="M748 745l12-7 12 7v11h-24z" fill="#fff"/><path d="M748 745l12 5 12-5-10 2-6 4z" fill="#1f2f3a"/>
<rect x="797" y="738" width="23" height="15" rx="1" fill="#eee"/><path d="M797 739l11.500 8 11.500-8" fill="none" stroke="#bbb"/>
<path d="M864 733v25" stroke="#2a8a3a"/><path d="M852.500 740v20" stroke="#b33"/><rect x="849" y="744" width="7" height="10" fill="#f27a7a"/><rect x="860" y="738" width="8" height="16" fill="#55e070"/>
<rect x="896" y="735" width="22" height="22" fill="#fff"/><rect x="897" y="736" width="20" height="13" fill="#111"/><path d="M897 750l7-9 5 5 3-3 5 7z" fill="#fff"/>
<rect x="932" y="726" width="48" height="40" fill="#4d5a66"/>
<circle cx="956" cy="746" r="9.500" fill="none" stroke="#fff" stroke-width="2"/><path d="M948 751l8-8 7 7" fill="none" stroke="#fff" stroke-width="3"/><circle cx="960" cy="741" r="1.500" fill="#fff"/>
<g fill="#6ea8d8"><rect x="544" y="764" width="40" height="2"/><rect x="740" y="764" width="40" height="2"/><rect x="789" y="764" width="40" height="2"/><rect x="838" y="764" width="34" height="2"/><rect x="872" y="764" width="6" height="2" fill="#4f7fa8"/><rect x="887" y="764" width="40" height="2"/><rect x="932" y="764" width="48" height="2" fill="#84c0ec"/></g>

<!-- tray -->
<circle cx="1132" cy="747" r="11" fill="#1b8fdc" stroke="#fff" stroke-width="1.500"/><text x="1132" y="753" class="b m n" style="font-size:16px;fill:#fff">?</text>
<path d="M1153.500 749.500l6-5.500 6 5.500" fill="none" stroke="#fff" stroke-width="1.200"/>
<rect x="1180" y="743" width="11" height="8" fill="none" stroke="#fff"/><rect x="1182" y="745" width="7" height="4" fill="#fff"/><path d="M1175 742h6M1178 741v9" stroke="#fff" stroke-width="1.300"/>
<path d="M1203 755a12 12 0 0 1 10-12M1206 755a8 8 0 0 1 7-8M1209 755a4 4 0 0 1 4-4" fill="none" stroke="#bbc" stroke-width="1"/><circle cx="1213" cy="755" r="1.300" fill="#fff"/>
<path d="M1224 744h3l4-4v13l-4-4h-3z" fill="none" stroke="#fff"/><path d="M1233 743c1.500 2 1.500 5 0 7M1236 741c2.500 3 2.500 9 0 12" fill="none" stroke="#889" />
<text x="1264" y="741" class="n" textLength="27" lengthAdjust="spacingAndGlyphs" style="fill:#fff;font-size:12.500px">02:12</text>
<text x="1249" y="761" class="n" textLength="58" lengthAdjust="spacingAndGlyphs" style="fill:#fff;font-size:12.500px">05/11/2019</text>
<path d="M1325.500 738.500h15v11h-5l-2.500 3-2.500-3h-5z" fill="none" stroke="#fff" stroke-width="1.100"/>
</svg>
</body></html>
